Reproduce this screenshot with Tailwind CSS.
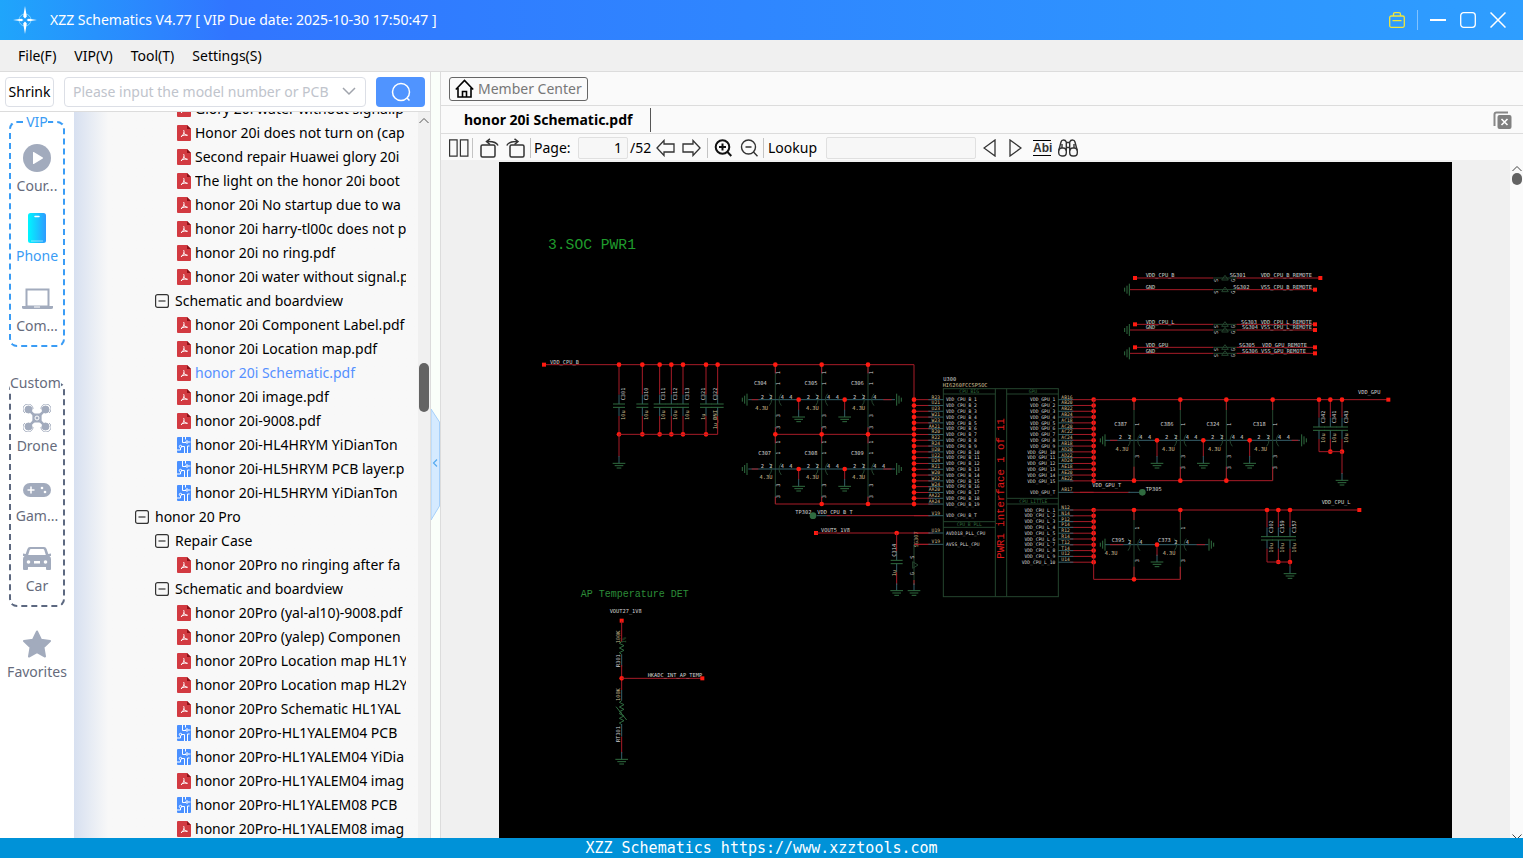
<!DOCTYPE html>
<html lang="en">

<head>
    <meta charset="UTF-8">
    <meta name="viewport" content="width=device-width, initial-scale=1.0">
    <title>XZZ Schematics</title>
    <script src="https://cdn.jsdelivr.net/npm/@tailwindcss/browser@4"></script>
</head>

<body class="flex h-screen flex-col overflow-hidden bg-white font-['Noto_Sans','Noto_Sans_CJK_SC',sans-serif] text-sm text-black">
    <!-- Title bar -->
    <header class="flex h-10 shrink-0 items-center bg-linear-to-r from-[#1fa5fb] via-[#3175ff] via-15% to-[#2e9eff] pr-4 pl-3 text-white">
        <svg class="h-7 w-[26px]" viewBox="0 0 26 28" fill="none">
            <circle cx="13" cy="14" r="6" stroke="#7fd4ff" stroke-width="1" />
            <path d="M13 0l1.8 10.500-1.800 2-1.800-2zM13 28l1.800-10.500-1.800-2-1.800 2zM1 14l8.500-1.300 2 1.300-2 1.300zM25 14l-8.500-1.300-2 1.300 2 1.300z" fill="#fff" />
        </svg>
        <h1 class="ml-3 flex-1">XZZ Schematics V4.77 [ VIP Due date: 2025-10-30 17:50:47 ]</h1>
        <button aria-label="Toolbox">
            <svg class="size-4" viewBox="0 0 16 16" fill="none" stroke="#f0e63c" stroke-width="1.300">
                <rect x=".7" y="4" width="14.600" height="11.300" rx="1.500" />
                <path d="M4.500 4V2.200q0-1.500 1.500-1.500h4q1.500 0 1.500 1.500V4M3.500 8.700h9" />
            </svg>
        </button>
        <span class="mx-3 h-5 w-px bg-white/40"></span>
        <button class="mr-[14px]" aria-label="Minimize">
            <svg class="size-4" viewBox="0 0 16 16" stroke="#fff" stroke-width="2"><path d="M0 8h16" /></svg>
        </button>
        <button class="mr-[14px]" aria-label="Maximize">
            <svg class="size-4" viewBox="0 0 16 16" fill="none" stroke="#fff" stroke-width="1.300"><rect x=".7" y=".7" width="14.600" height="14.600" rx="3" /></svg>
        </button>
        <button class="mr-px" aria-label="Close">
            <svg class="size-4" viewBox="0 0 16 16" stroke="#fff" stroke-width="1.500"><path d="M.5.5l15 15M15.500.5l-15 15" /></svg>
        </button>
    </header>

    <!-- Menu -->
    <nav class="flex h-8 shrink-0 items-center gap-[18px] border-b border-[#dcdcdc] bg-[#f0f0f0] pt-px pl-[18px]">
        <button>File(F)</button>
        <button>VIP(V)</button>
        <button>Tool(T)</button>
        <button>Settings(S)</button>
    </nav>

    <div class="flex min-h-0 flex-1">
        <!-- Left panel -->
        <aside class="flex w-[431px] shrink-0 flex-col border-r border-[#dcdcdc]">
            <form class="flex h-10 shrink-0 items-center border-b border-[#dcdcdc] pt-px pr-[5px] pl-[5px]">
                <button type="button" class="mr-[10px] h-[30px] w-[49px] rounded border border-[#dcdfe6]">Shrink</button>
                <div class="flex h-[30px] min-w-0 flex-1 items-center rounded border border-[#dcdfe6] pr-2 pl-2">
                    <input type="text" aria-label="Model number" placeholder="Please input the model number or PCB"
                        class="min-w-0 flex-1 outline-none placeholder:text-[#c0c4cc]">
                    <button type="button" class="ml-1" aria-label="Show models">
                        <svg class="h-4 w-4" viewBox="0 0 16 16" fill="none" stroke="#a0a4ac" stroke-width="1.500"><path d="M2 4l6 6 6-6" /></svg>
                    </button>
                </div>
                <button type="button" class="ml-[10px] flex h-[30px] w-[49px] items-center justify-center rounded-sm bg-[#5094ff]" aria-label="Search">
                    <svg class="size-5" viewBox="0 0 20 20" fill="none" stroke="#fff" stroke-width="1.500"><circle cx="10" cy="10" r="8.500" /><path d="M16 16l2.500 2.500" /></svg>
                </button>
            </form>

            <div class="flex min-h-0 flex-1">
                <!-- Categories -->
                <div class="flex w-[74px] shrink-0 flex-col items-center text-[#666b7c]">
                    <fieldset class="w-14 rounded-lg border-2 border-dashed border-[#3a9cf5] pt-px pb-0.5">
                        <legend class="mx-auto leading-5 text-[#3a9cf5]">VIP</legend>
                        <button class="flex h-[70px] w-full flex-col items-center gap-1 pt-[11px] leading-5">
                            <svg class="size-7 shrink-0" viewBox="0 0 28 28"><circle cx="14" cy="14" r="14" fill="#a2abbd" /><path d="M10 8.500v11q0 .8.8.4l9-5.400q.6-.5 0-1l-9-5.400q-.8-.4-.8.400z" fill="#fff" /></svg>
                            Cour...
                        </button>
                        <button class="flex h-[70px] w-full flex-col items-center gap-1 pt-[11px] leading-5 text-[#3a9cf5]">
                            <svg class="size-7 shrink-0 overflow-visible" viewBox="0 0 28 28">
                                <linearGradient id="phone"><stop stop-color="#00f6ff" /><stop offset="1" stop-color="#2e9bff" /></linearGradient>
                                <rect x="5" y="-1" width="18" height="30" rx="2.500" fill="url(#phone)" />
                                <path d="M12 2.500h4" stroke="#fff" stroke-width="1.500" stroke-linecap="round" />
                                <path d="M8 27h12" stroke="#fff" stroke-opacity=".5" />
                            </svg>
                            Phone
                        </button>
                        <button class="flex h-[70px] w-full flex-col items-center gap-1 pt-[11px] leading-5">
                            <svg class="size-7 shrink-0 overflow-visible" viewBox="0 0 28 28"><path d="M3.500 5.500h22v17h-22z" fill="none" stroke="#a2abbd" stroke-width="2" /><path d="M-1 22h31v1.500q0 1.500-2 1.500H1q-2 0-2-1.500z" fill="#a2abbd" /><path d="M11 23h6" stroke="#fff" /></svg>
                            Com...
                        </button>
                    </fieldset>
                    <fieldset class="mt-[26px] w-14 rounded-lg border-2 border-dashed border-[#5c6880] pb-0.5">
                        <legend class="mx-auto -ml-px leading-5">Custom</legend>
                        <button class="flex h-[70px] w-full flex-col items-center gap-1 pt-[11px] leading-5">
                            <svg class="size-7 shrink-0" viewBox="0 0 28 28" fill="none" stroke="#a2abbd">
                                <path d="M5 5l6 6v6l-6 6M23 5l-6 6v6l6 6" stroke-width="2.500" />
                                <path d="M10 10h8v8h-8z" fill="#a2abbd" />
                                <circle cx="14" cy="14" r="2" stroke="#fff" />
                                <g fill="#a2abbd"><circle cx="5.500" cy="5.500" r="3.500" /><circle cx="22.500" cy="5.500" r="3.500" /><circle cx="5.500" cy="22.500" r="3.500" /><circle cx="22.500" cy="22.500" r="3.500" /></g>
                                <path d="M2 9A5 5 0 1 1 10 5M26 9A5 5 0 1 0 18 5M2 19A5 5 0 1 0 10 23M26 19A5 5 0 1 1 18 23" />
                            </svg>
                            Drone
                        </button>
                        <button class="flex h-[70px] w-full flex-col items-center gap-1 pt-[11px] leading-5">
                            <svg class="size-7 shrink-0" viewBox="0 0 28 28"><rect y="9" width="28" height="14" rx="7" fill="#a2abbd" /><path d="M4.500 16h7M8 12.500v7" stroke="#fff" stroke-width="1.500" /><circle cx="19" cy="14" r="1.300" fill="#fff" /><circle cx="22" cy="18" r="1.300" fill="#fff" /></svg>
                            Gam...
                        </button>
                        <button class="flex h-[70px] w-full flex-col items-center gap-1 pt-[11px] leading-5">
                            <svg class="size-7 shrink-0" viewBox="0 0 28 28"><path d="M7 3h14q2 0 2.600 2l1.700 5 2.700-.5V12h-1.500Q28 13 28 15v10q0 1-1 1h-3q-1 0-1-1v-2H5v2q0 1-1 1H1q-1 0-1-1V15q0-2 1.500-3H0V9.500l2.700.5 1.700-5Q5 3 7 3z" fill="#a2abbd" /><path d="M8 5h12q1 0 1.300 1l1.500 5H5.200l1.500-5Q7 5 8 5zM11 17h6v2.500h-6z" fill="#fff" /><circle cx="5.500" cy="18" r="1.800" fill="#fff" /><circle cx="22.500" cy="18" r="1.800" fill="#fff" /></svg>
                            Car
                        </button>
                    </fieldset>
                    <button class="mt-3 flex h-[70px] w-full flex-col items-center gap-1 pt-[11px] leading-5">
                        <svg class="size-7 shrink-0" viewBox="0 0 28 28"><path d="M14 1.500l4 8.200 9 1.300-6.500 6.300 1.500 9.200-8-4.300-8 4.300 1.500-9.200L1 11l9-1.300z" fill="#a2abbd" stroke="#a2abbd" stroke-width="2" stroke-linejoin="round" /></svg>
                        Favorites
                    </button>
                </div>

                <!-- File tree -->
                <div class="min-w-0 flex-1 overflow-hidden bg-linear-to-r from-[#d7e0f0] via-[#f8f8f8] via-10% to-[#f8f8f8] pr-3">
                    <ul id="tree" class="-mt-[15px]"></ul>
                </div>
                <div class="flex w-3 shrink-0 flex-col items-center bg-[#f0f0f0] pt-1">
                    <svg class="h-2 w-[10px] shrink-0" viewBox="0 0 10 8" fill="none" stroke="#555"><path d="M.5 7L5 2.500 9.500 7" /></svg>
                    <div class="mt-[239px] h-[49px] w-[10px] shrink-0 rounded-full bg-[#636363]"></div>
                </div>
            </div>
        </aside>

        <!-- Splitter -->
        <div class="flex w-[9px] shrink-0 items-center bg-[#fafffa]">
            <button aria-label="Collapse panel">
                <svg class="mt-[18px] h-[111px] w-[9px]" viewBox="0 0 9 111" fill="none"><path d="M0 0l8.500 13v84L0 111z" fill="#d5eaff" stroke="#a5cffa" /><path d="M6 50.500l-3.500 3.500L6 57.500" stroke="#55aaf0" stroke-width="1.200" /></svg>
            </button>
        </div>

        <!-- Document panel -->
        <main class="flex min-w-0 flex-1 flex-col border-l border-[#dcdcdc] bg-[#fafafa]">
            <div class="flex h-[34px] shrink-0 items-center border-b border-[#dcdcdc] pl-2">
                <button class="flex h-6 items-center gap-1 rounded-[3px] border border-[#666] pr-[5px] pl-[5px] text-[#777]">
                    <svg class="size-[19px]" viewBox="0 0 19 19" fill="none" stroke="#000" stroke-width="1.600"><path d="M.8 10.500L9.500 1.500l8.700 9M3 9v9h13V9M7.500 18v-5.500h4V18" /></svg>
                    Member Center
                </button>
            </div>
            <div class="flex h-7 shrink-0 items-center border-b border-[#dcdcdc] pr-[11px]">
                <button class="mr-auto h-6 border-r border-[#555] pr-[18px] pl-[23px] font-bold">honor 20i Schematic.pdf</button>
                <button aria-label="Close all tabs">
                    <svg class="h-[18px] w-[19px]" viewBox="0 0 19 18"><path d="M1.500 15V3.500q0-2 2-2H15" fill="none" stroke="#888" stroke-width="2" /><rect x="4.500" y="4" width="14" height="14" rx="2" fill="#808080" /><path d="M8.500 8l6 6M14.500 8l-6 6" stroke="#fff" stroke-width="1.600" /></svg>
                </button>
            </div>
            <div class="flex h-[26px] shrink-0 items-center pt-px pl-2">
                <button aria-label="Two pages"><svg class="h-[18px] w-5" viewBox="0 0 20 18" fill="none" stroke="#333" stroke-width="1.200"><path d="M.6.8h7.500v16.400H.6zM11.400.8h7.500v16.400h-7.500z" /></svg></button>
                <span class="mx-[3px] h-5 w-px bg-[#c4c4c4]"></span>
                <button class="ml-[3px]" aria-label="Rotate left"><svg class="size-5" viewBox="0 0 20 20" fill="none" stroke="#333" stroke-width="1.500"><rect x="2" y="7" width="14" height="12" rx="1.500" /><path d="M19 7.500Q17 3 8 3.500M11 .8L7.500 3.500l3.500 3" /></svg></button>
                <button class="ml-[7px]" aria-label="Rotate right"><svg class="size-5" viewBox="0 0 20 20" fill="none" stroke="#333" stroke-width="1.500"><rect x="4" y="7" width="14" height="12" rx="1.500" /><path d="M.8 7.500Q3 3 11.500 3.500M8.500.8l3.500 2.700-3.500 3" /></svg></button>
                <span class="mr-[3px] ml-1 h-5 w-px bg-[#c4c4c4]"></span>
                <label for="page" class="w-[44px]">Page:</label>
                <input id="page" type="text" value="1" class="h-[22px] w-[50px] rounded-xs border border-[#e0e0e0] bg-[#f7f7f7] pr-[5px] text-right outline-none">
                <span class="w-[27px] pl-[2px]">/52</span>
                <button class="ml-px" aria-label="Previous page"><svg class="h-[18px] w-[19px]" viewBox="0 0 19 18" fill="none" stroke="#333" stroke-width="1.300"><path d="M1 9l7-7.500V5h10v8H8v3.500z" /></svg></button>
                <button class="ml-[7px]" aria-label="Next page"><svg class="h-[18px] w-[19px]" viewBox="0 0 19 18" fill="none" stroke="#333" stroke-width="1.300"><path d="M18 9l-7-7.500V5H1v8h10v3.500z" /></svg></button>
                <span class="mx-[6px] h-5 w-px bg-[#c4c4c4]"></span>
                <button aria-label="Zoom in"><svg class="size-[18px]" viewBox="0 0 18 18" fill="none" stroke="#111" stroke-width="2"><circle cx="8.500" cy="8" r="6.800" /><path d="M13.500 13l3.800 4M5 8h7M8.500 4.500v7" /></svg></button>
                <button class="ml-2" aria-label="Zoom out"><svg class="size-[18px]" viewBox="0 0 18 18" fill="none" stroke="#333" stroke-width="1.400"><circle cx="8.500" cy="8" r="7" /><path d="M13.500 13l4 4.300M5.500 8h6" /></svg></button>
                <span class="mr-1 ml-[5px] h-5 w-px bg-[#c4c4c4]"></span>
                <label for="lookup" class="w-[58px]">Lookup</label>
                <input id="lookup" type="text" class="h-[22px] w-[150px] rounded-xs border border-[#e0e0e0] bg-[#f7f7f7] px-1 outline-none">
                <button class="ml-[7px]" aria-label="Find previous"><svg class="h-[18px] w-[13px]" viewBox="0 0 13 18" fill="none" stroke="#333" stroke-width="1.300"><path d="M12 1v16L1 9z" /></svg></button>
                <button class="ml-[13px]" aria-label="Find next"><svg class="h-[18px] w-[13px]" viewBox="0 0 13 18" fill="none" stroke="#333" stroke-width="1.300"><path d="M1 1v16l11-8z" /></svg></button>
                <button class="ml-[11px] h-4 w-[18px] border-y border-black text-center font-['Liberation_Sans',sans-serif] text-xs leading-[14px] font-bold text-[#333]">Abi</button>
                <button class="ml-[7px]" aria-label="Search text"><svg class="h-[18px] w-5" viewBox="0 0 20 18" fill="none" stroke="#333" stroke-width="1.400"><rect x=".7" y="9" width="7.600" height="8" rx="3.200" /><rect x="11.700" y="9" width="7.600" height="8" rx="3.200" /><path d="M.8 11.500L3 3q.5-2 2.500-2T8.300 3v9M19.200 11.500L17 3q-.5-2-2.500-2t-2.800 2v9M8.300 3.500h3.400M8.300 8.500h3.400M4 9V5M16 9V5" /></svg></button>
            </div>
            <div class="flex min-h-0 flex-1">
                <div class="flex min-w-0 flex-1 justify-center overflow-hidden bg-[#f0f0f0] pt-[2px]">
                    <svg id="sheet" class="w-[953px] shrink-0 self-start bg-black" viewBox="0 0 2859 2028"></svg>
                </div>
                <div class="flex w-[13px] shrink-0 flex-col items-center pt-[5px]">
                    <svg class="h-2 w-[10px]" viewBox="0 0 10 8" fill="none" stroke="#444"><path d="M.5 6L5 1.500 9.500 6" /></svg>
                    <div class="h-3 w-[10px] rounded-full bg-[#636363]"></div>
                    <svg class="mt-auto h-1 w-[10px]" viewBox="0 0 10 4" fill="none" stroke="#444"><path d="M.5.5L5 5 9.500.5" /></svg>
                </div>
            </div>
        </main>
    </div>

    <!-- Status bar -->
    <footer class="h-5 shrink-0 bg-[#0092d8] text-center font-['DejaVu_Sans_Mono',monospace] text-[15px] leading-5 text-white">XZZ Schematics https://www.xzztools.com</footer>

    <script>
        // File tree: [type, label]
        const files = [
            ['pdf', 'Glory 20i water without signal.p'],
            ['pdf', 'Honor 20i does not turn on (cap'],
            ['pdf', 'Second repair Huawei glory 20i'],
            ['pdf', 'The light on the honor 20i boot'],
            ['pdf', 'honor 20i No startup due to wa'],
            ['pdf', 'honor 20i harry-tl00c does not p'],
            ['pdf', 'honor 20i no ring.pdf'],
            ['pdf', 'honor 20i water without signal.p'],
            ['sub', 'Schematic and boardview'],
            ['pdf', 'honor 20i Component Label.pdf'],
            ['pdf', 'honor 20i Location map.pdf'],
            ['on', 'honor 20i Schematic.pdf'],
            ['pdf', 'honor 20i image.pdf'],
            ['pdf', 'honor 20i-9008.pdf'],
            ['pcb', 'honor 20i-HL4HRYM YiDianTon'],
            ['pcb', 'honor 20i-HL5HRYM PCB layer.p'],
            ['pcb', 'honor 20i-HL5HRYM YiDianTon'],
            ['top', 'honor 20 Pro'],
            ['sub', 'Repair Case'],
            ['pdf', 'honor 20Pro no ringing after fa'],
            ['sub', 'Schematic and boardview'],
            ['pdf', 'honor 20Pro (yal-al10)-9008.pdf'],
            ['pdf', 'honor 20Pro (yalep) Componen'],
            ['pdf', 'honor 20Pro Location map HL1Y'],
            ['pdf', 'honor 20Pro Location map HL2Y'],
            ['pdf', 'honor 20Pro Schematic HL1YAL'],
            ['pcb', 'honor 20Pro-HL1YALEM04 PCB'],
            ['pcb', 'honor 20Pro-HL1YALEM04 YiDia'],
            ['pdf', 'honor 20Pro-HL1YALEM04 imag'],
            ['pcb', 'honor 20Pro-HL1YALEM08 PCB'],
            ['pdf', 'honor 20Pro-HL1YALEM08 imag'],
        ];
        const folderIcon = '<svg class="h-[14px] w-[14px] shrink-0" viewBox="0 0 14 14" fill="none" stroke="#333" stroke-width="1.200"><rect x=".6" y=".6" width="12.800" height="12.800" rx="2" /><path d="M3.500 7h7" /></svg>';
        const pdfIcon = '<svg class="h-4 w-[14px] shrink-0" viewBox="0 0 14 16"><path d="M1 0h9l4 4v11q0 1-1 1H1q-1 0-1-1V1q0-1 1-1z" fill="#d23a41" /><path d="M10 0l4 4h-4z" fill="#8c1218" /><path d="M6.500 5c1.200 2 .5 4-2.500 7M6.800 7.500c.2 2 1.700 2.500 4 2.800M4.500 11c2-1 3.500-1 5.500-.7" fill="none" stroke="#fff" /></svg>';
        const pcbIcon = '<svg class="h-4 w-[14px] shrink-0" viewBox="0 0 14 16"><rect width="14" height="16" rx="1" fill="#4a90ff" /><g fill="none" stroke="#fff"><path d="M5.500 0v5.500h3.500M8.500 0v2.500M13.500 5h-2M10.500 16V9h2M7.500 16V9.500H4M0 13h3.500v-2" /><circle cx="10" cy="5" r="1.200" /><circle cx="3.500" cy="9.500" r="1.200" /></g></svg>';
        const rows = {
            top: ['pl-[61px] gap-[6px]', folderIcon],
            sub: ['pl-[81px] gap-[6px]', folderIcon],
            pdf: ['pl-[103px] gap-1', pdfIcon],
            on: ['pl-[103px] gap-1 text-[#5590ff]', pdfIcon],
            pcb: ['pl-[103px] gap-1', pcbIcon],
        };
        document.getElementById('tree').innerHTML = files.map(([type, label]) =>
            `<li class="flex h-6 items-center ${rows[type][0]}">${rows[type][1]}<span class="flex-1 overflow-hidden whitespace-nowrap">${label}</span></li>`
        ).join('');

        // Schematic sheet
        const RED = '#ff1a10', WIRE = '#a81c28', PART = '#24452e', GREEN = '#2f6b3f', PIN = '#35606a', TEXT = '#d0d0d0', VALUE = '#cdbd90';
        const line = (pts, color = WIRE, width = 3) => `<polyline points="${pts}" fill="none" stroke="${color}" stroke-width="${width}" />`;
        const dot = (x, y) => `<circle cx="${x}" cy="${y}" r="7" fill="${RED}" />`;
        const port = (x, y) => `<rect x="${x - 6}" y="${y - 6}" width="12" height="12" fill="${RED}" />`;
        const text = (x, y, s, color = TEXT, size = 16, anchor = 'start') => `<text x="${x}" y="${y}" fill="${color}" font-size="${size}" text-anchor="${anchor}">${s}</text>`;
        const mono = (x, y, s, color = TEXT, anchor = 'start') => `<text x="${x}" y="${y}" fill="${color}" font-size="14" text-anchor="${anchor}">${s}</text>`;
        const turned = (x, y, s, color = TEXT) => `<text transform="translate(${x} ${y}) rotate(-90)" fill="${color}" font-size="16">${s}</text>`;
        const group = (x, y, parts) => `<g transform="translate(${x} ${y})">${parts.flat(3).join('')}</g>`;

        // Ground symbols: pointing down, and sideways
        const ground = (x, y) => line([x, y - 22, x, y], PIN) + [19, 13, 7].map((r, i) => line([x - r, y + i * 7, x + r, y + i * 7], GREEN)).join('');
        const groundSide = (x, y, dir) => [18, 12, 6].map((r, i) => line([x + dir * i * 7, y - r, x + dir * i * 7, y + r], GREEN)).join('');

        function capacitor(x, top, plate, bottom, name, value, tx = x + 17) {
            return line([x, top, x, plate - 28]) + line([x, plate - 28, x, plate], PIN)
                + line([x, plate + 10, x, plate + 36], PIN) + line([x, plate + 36, x, bottom])
                + line([x - 18, plate, x + 18, plate], GREEN) + line([x - 18, plate + 10, x + 18, plate + 10], GREEN)
                + turned(tx, plate - 11, name) + turned(tx, plate + (value.length > 3 ? 76 : 48), value, VALUE);
        }

        // Feed-through capacitor on a vertical line
        function feedThrough(x, y, name, value, nx) {
            return text(nx, y - 43, name, TEXT, 16, 'middle') + text(nx + 4, y + 31, value, VALUE, 16, 'middle')
                + `<path d="M${x - 18} ${y - 18}q14 18 0 36M${x + 18} ${y - 18}q-14 18 0 36" fill="none" stroke="${PART}" stroke-width="3" />`
                + text(x - 18, y - 3, '2') + text(x + 16, y - 3, '4')
                + turned(x + 14, y - 43, '1') + turned(x + 14, y + 53, '3');
        }

        const cpuB = group(93, 534, [
            line([42, 74, 1152, 74, 1152, 492]), port(42, 74), text(60, 71, 'VDD_CPU_B'),
            [[267, 'C301', '10u'], [337, 'C310', '10u'], [389, 'C311', '10u'], [424, 'C312', '10u'], [459, 'C313', '10u'], [528, 'C321', '1u'], [563, 'C322', '1u_DNI']]
                .map(([x, name, value], i) => [capacitor(x, 74, 192, 283, name, value, i < 5 ? x + 17 : x - 3), dot(x, 74), i < 6 ? dot(x, 283) : '']),
            line([267, 283, 563, 283]), line([267, 283, 267, 350]), ground(267, 370),
            line([736, 283, 1152, 283]), line([736, 492, 1152, 492]),
            [736, 875, 1014].map(x => [line([x, 74, x, 492], PART), line([x, 74, x, 100]), line([x, 262, x, 310]), line([x, 470, x, 492]), dot(x, 74), dot(x, 283)]),
            dot(875, 492), dot(1014, 492),
            [179, 387].map((y, row) => [
                line([655, y, 1095, y], PIN), line([665, y, 685, y]), line([1060, y, 1085, y]),
                groundSide(651, y, -1), groundSide(1100, y, 1),
                [736, 875, 1014].map((x, i) => feedThrough(x, y, [['C304', 'C305', 'C306'], ['C307', 'C308', 'C309']][row][i], '4.3U', i || row ? x - 32 : x - 45)),
                [696, 834, 973].map(x => text(x - 4, y - 3, '2')), [782, 921].map(x => text(x - 4, y - 3, '4')), row ? text(1056, y - 3, '4') : '',
                [750, 889, 1028].map(x => [turned(x, y - 76, '1'), turned(x, y + 88, '3')]),
                [806, 944].map(x => [line([x, y, x, y + 32]), dot(x, y), ground(x, y + 52)]),
            ]),
            text(796, 523, 'TP302'), text(862, 523, 'VDD_CPU_B_T'), line([860, 527, 900, 527], PIN), line([890, 527, 1200, 527]),
            `<circle cx="849" cy="527" r="10" fill="${GREEN}" />`,
            port(858, 579), text(873, 575, 'VOUT5_1V8'), line([858, 579, 1200, 579]), dot(1100, 579),
            capacitor(1100, 579, 661, 735, 'C314', '1u', 1098), ground(1100, 752),
            line([1200, 613, 1152, 613]), line([1152, 613, 1152, 735], PART), line([1152, 720, 1152, 735]), ground(1152, 752),
            turned(1165, 622, 'SG307', VALUE), turned(1152, 656, 'S'), turned(1152, 706, 'G'), line([1148, 665, 1164, 675, 1148, 685, 1148, 665], PART),
        ]);

        const pinsB = ['R23', 'U21', 'U23', 'W21', 'W23', 'AA21', 'R20', 'R22', 'R24', 'U20', 'U22', 'U24', 'R21', 'W20', 'W22', 'W24', 'AA20', 'AA22', 'AA24'];
        const pinsG = ['AB16', 'AB20', 'AB22', 'AB24', 'AC18', 'AC20', 'AC22', 'AC24', 'AB18', 'AD20', 'AD22', 'AD24', 'AE18', 'AE20', 'AE22'];
        const pinsL = ['N12', 'N14', 'P12', 'P14', 'R12', 'R14', 'T12', 'T14', 'U12', 'U14'];
        const leftPin = (y, pin, name) => line([42, y, 100, y]) + line([85, y, 130, y], PIN) + mono(120, y - 3, pin, VALUE, 'end') + mono(138, y + 5, name);
        const rightPin = (y, pin, name) => line([510, y, 581, y]) + line([475, y, 520, y], PIN) + mono(484, y - 3, pin, VALUE) + mono(466, y + 5, name, TEXT, 'end');
        const chip = group(1203, 594, [
            `<rect x="130" y="86" width="345" height="624" fill="none" stroke="${PART}" stroke-width="3" />`,
            line([286, 86, 286, 710], PART), line([320, 86, 320, 710], PART),
            line([130, 102, 286, 102], PART), line([320, 102, 475, 102], PART),
            line([130, 485, 286, 485], PART), line([130, 502, 286, 502], PART),
            line([320, 415, 475, 415], PART), line([320, 432, 475, 432], PART),
            mono(178, 99, 'CPU BIG', GREEN), mono(386, 99, 'GPU', GREEN), mono(170, 498, 'CPU_B PLL', GREEN), mono(358, 428, 'CPU LITTLE', GREEN),
            text(130, 64, 'U300'), text(128, 81, 'HI6260FCCSPSOC', VALUE),
            pinsB.map((pin, i) => leftPin(119 + i * 17.4, pin, 'VDD_CPU_B_' + (i + 1)) + dot(42, 119 + i * 17.4)),
            leftPin(467, 'V19', 'VDD_CPU_B_T'), leftPin(519, 'U19', 'AVDD18_PLL_CPU'), leftPin(553, 'V19', 'AVSS_PLL_CPU'),
            pinsG.map((pin, i) => rightPin(119 + i * 17.4, pin, 'VDD_GPU_' + (i + 1)) + dot(581, 119 + i * 17.4)),
            rightPin(397, 'AB17', 'VDD_GPU_T'),
            pinsL.map((pin, i) => rightPin(450 + i * 17.4, pin, 'VDD_CPU_L_' + (i + 1)) + dot(581, 450 + i * 17.4)),
            `<text transform="translate(313 596) rotate(-90)" fill="#e01a1a" font-size="32" font-family="Liberation Mono, monospace">PWR1 interface 1 of 11</text>`,
        ]);

        const remote = (y, left, name, nx, label, lx, x = 705) => line([left === 'GND' ? 150 : 165, y, 400, y]) + line([400, y, 470, y], PART) + line([470, y, x, y])
            + text(197, y - 2, left) + text(nx, y - 2, name) + text(lx, y - 2, label) + port(x, y)
            + (left === 'GND' ? groundSide(148, y, -1) : port(165, y))
            + turned(413, y + 12, 'S') + turned(466, y + 12, 'G') + line([425, y + 6, 435, y - 8, 445, y + 6, 425, y + 6], PART);

        const right = group(1743, 294, [
            remote(54, 'VDD_CPU_B', 'SG301', 449, 'VDD_CPU_B_REMOTE', 542, 721), remote(89, 'GND', 'SG302', 460, 'VSS_CPU_B_REMOTE', 542),
            remote(193, 'VDD_CPU_L', 'SG303', 483, 'VDD_CPU_L_REMOTE', 542), remote(210, 'GND', 'SG304', 486, 'VSS_CPU_L_REMOTE', 542),
            remote(262, 'VDD_GPU', 'SG305', 477, 'VDD_GPU_REMOTE', 546), remote(280, 'GND', 'SG306', 486, 'VSS_GPU_REMOTE', 543),

            // VDD_GPU
            line([41, 419, 925, 419]), line([41, 419, 41, 662, 578, 662]), port(925, 419), text(834, 402, 'VDD_GPU'),
            line([75, 541, 660, 541], PIN), line([90, 541, 112, 541]), line([635, 541, 655, 541]), groundSide(75, 541, -1), groundSide(665, 541, 1),
            [[162, 'C387'], [301, 'C386'], [439, 'C324'], [578, 'C318']].map(([x, name], i) => [
                line([x, 419, x, 662], PART), line([x, 419, x, 450]), line([x, 620, x, 662]), dot(x, 419), i < 3 ? dot(x, 662) : '',
                feedThrough(x, 541, name, '4.3U', x - 40), text(x - 46, 538, '2'), text(x + 42, 538, '4'), i ? turned(x + 14, 628, '3') : '',
            ]),
            [231, 370, 509].map(x => [line([x, 541, x, 590]), dot(x, 541), ground(x, 610)]),
            [[717, 'C342'], [751, 'C341'], [786, 'C343']].map(([x, name], i) => [capacitor(x, 419, 501, 575, name, '10u'), dot(x, 419), i ? dot(x, 575) : '']),
            line([717, 575, 786, 575]), line([786, 575, 786, 642]), ground(786, 661),
            text(37, 681, 'VDD_GPU_T'), line([0, 697, 150, 697]), line([145, 697, 180, 697], PIN),
            `<circle cx="187" cy="697" r="10" fill="${GREEN}" />`, text(197, 692, 'TP305'),

            // VDD_CPU_L
            line([41, 750, 838, 750]), line([41, 750, 41, 958, 301, 958, 301, 920]), port(838, 750), text(725, 731, 'VDD_CPU_L'),
            line([75, 854, 385, 854], PIN), line([90, 854, 130, 854]), line([350, 854, 375, 854]), groundSide(75, 854, -1), groundSide(387, 854, 1),
            [[162, 'C395'], [301, 'C373']].map(([x, name], i) => [
                line([x, 750, x, 958], PART), line([x, 750, x, 780]), line([x, 920, x, 958]), dot(x, 750), i ? '' : dot(x, 958),
                `<path d="M${x - 18} 836q14 18 0 36M${x + 18} 836q-14 18 0 36" fill="none" stroke="${PART}" stroke-width="3" />`,
                text(x - 67, 845, name), text(x - 18, 851, '2'), text(x + 16, 851, '4'), turned(x + 14, 809, '1'), turned(x + 14, 907, '3'),
                text(x - 88 + i * 35, 885, '4.3U', VALUE),
            ]),
            line([231, 854, 231, 888]), dot(231, 854), ground(231, 906),
            [[561, 'C302'], [595, 'C359'], [630, 'C357']].map(([x, name], i) => [capacitor(x, 750, 830, 906, name, '10u'), dot(x, 750), i ? dot(x, 906) : '']),
            line([561, 906, 630, 906]), line([630, 906, 630, 920]), ground(630, 941),
        ]);

        const zigzag = (x, y) => line([x, y, x - 7, y + 5, x + 7, y + 12, x - 7, y + 19, x + 7, y + 26, x - 7, y + 33, x, y + 38], GREEN);
        const temperature = group(93, 1224, [
            `<text x="152" y="82" fill="#2c8c38" font-size="30" font-family="Liberation Mono, monospace">AP Temperature DET</text>`,
            text(239, 130, 'VOUT27_1V8'), port(275, 152), line([275, 152, 275, 215]), zigzag(275, 215), line([275, 253, 275, 290], PIN), line([275, 285, 275, 360]),
            turned(271, 220, '100K', VALUE), turned(287, 220, '1%', GREEN), turned(271, 291, 'R301'),
            dot(275, 325), line([275, 325, 517, 325]), port(517, 325), text(353, 320, 'HKADC_INT_AP_TEMP'),
            line([275, 360, 275, 392], PIN), zigzag(275, 392), zigzag(275, 426), line([258, 410, 290, 450], GREEN), line([275, 462, 275, 500], PIN), line([275, 500, 275, 550]),
            turned(271, 393, '100K', VALUE), turned(271, 516, 'RT301'), ground(275, 568),
        ]);

        const sheet = document.getElementById('sheet');
        sheet.setAttribute('font-family', 'DejaVu Sans Mono, monospace');
        sheet.innerHTML = `<text x="147" y="262" fill="#1f9a2c" font-size="44" font-family="Liberation Mono, monospace">3.SOC PWR1</text>` + cpuB + chip + right + temperature;
    </script>
</body>

</html>
